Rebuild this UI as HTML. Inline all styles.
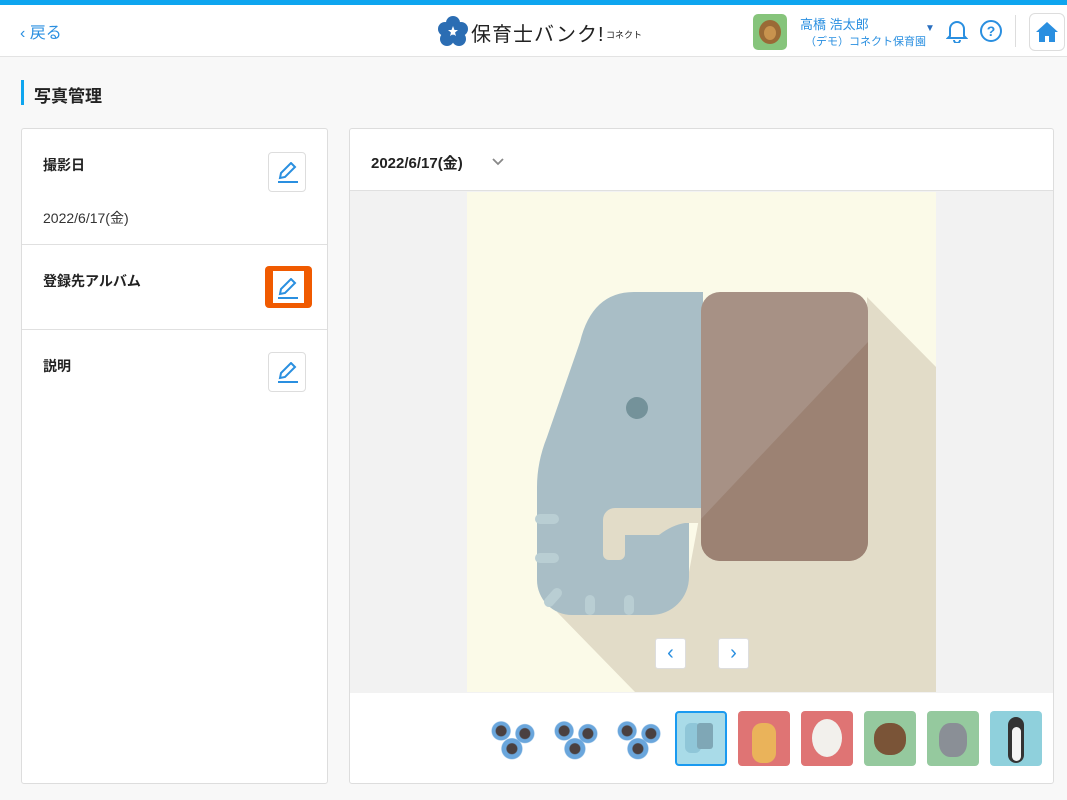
<!DOCTYPE html>
<html><head><meta charset="utf-8"><style>
*{margin:0;padding:0;box-sizing:border-box}
body{width:1067px;height:800px;background:#f8f8f8;font-family:"Liberation Sans","Noto Sans CJK JP",sans-serif;position:relative;overflow:hidden;color:#222}
.top{position:absolute;left:0;top:0;width:1067px;height:5px;background:#0ea5ef}
.hdr{position:absolute;left:0;top:5px;width:1067px;height:52px;background:#fff;border-bottom:1px solid #e3e3e3}
.abs{position:absolute}
.card{position:absolute;background:#fff;border:1px solid #ddd;border-radius:3px}
.btn{position:absolute;width:38px;height:40px;border:1px solid #ddd;border-radius:4px;background:#fff}
.lbl{position:absolute;font-size:14px;font-weight:bold;color:#222}
.thumb{position:absolute;top:711px;width:52px;height:55px;border-radius:4px;overflow:hidden}
</style></head><body>
<div class="top"></div>
<div class="hdr">
 <div class="abs" style="left:20px;top:14px;color:#2a8fe0;font-size:16px">&#8249;&nbsp;戻る</div>
 <svg class="abs" style="left:438px;top:9px" width="30" height="34" viewBox="0 0 30 34"><g fill="#2b6db3"><circle cx="15" cy="9" r="7"/><circle cx="7" cy="15" r="7"/><circle cx="23" cy="15" r="7"/><circle cx="9" cy="25" r="7"/><circle cx="21" cy="25" r="7"/></g><polygon points="15,12 16.5,16 20,16 17,18.5 18,22 15,20 12,22 13,18.5 10,16 13.5,16" fill="#fff"/></svg>
 <div class="abs" style="left:471px;top:13px;font-size:20px;color:#222;letter-spacing:1px">保育士バンク!</div>
 <div class="abs" style="left:606px;top:23px;font-size:9px;color:#222">コネクト</div>
 <div class="abs" style="left:753px;top:9px;width:34px;height:36px;border-radius:5px;background:#86c47b"><div style="position:absolute;left:6px;top:6px;width:22px;height:24px;border-radius:50%;background:#9a6a36"></div><div style="position:absolute;left:11px;top:12px;width:12px;height:14px;border-radius:50%;background:#c8934e"></div></div>
 <div class="abs" style="left:800px;top:9px;font-size:13px;color:#2a8fe0">高橋 浩太郎</div>
 <div class="abs" style="left:805px;top:28px;font-size:11px;color:#2a8fe0">（デモ）コネクト保育園</div>
 <div class="abs" style="left:925px;top:18px;font-size:10px;color:#2a6fc0">▼</div>
 <svg class="abs" style="left:946px;top:14px" width="22" height="24" viewBox="0 0 22 24"><path d="M4 17V10a7 7 0 0114 0v7l2 2H2z" fill="none" stroke="#2a8fe0" stroke-width="2"/><path d="M8 21a3 3 0 006 0" fill="none" stroke="#2a8fe0" stroke-width="2"/></svg>
 <svg class="abs" style="left:979px;top:14px" width="24" height="24" viewBox="0 0 24 24"><circle cx="12" cy="12" r="10" fill="none" stroke="#2a8fe0" stroke-width="2"/><text x="12" y="17" font-size="14" font-weight="bold" text-anchor="middle" fill="#2a8fe0" font-family="Liberation Sans">?</text></svg>
 <div class="abs" style="left:1015px;top:10px;width:1px;height:32px;background:#ddd"></div>
 <div class="abs" style="left:1029px;top:8px;width:36px;height:38px;border:1px solid #ddd;border-radius:6px;background:#fff"></div>
 <svg class="abs" style="left:1035px;top:16px" width="24" height="22" viewBox="0 0 24 22"><path d="M12 1L1 11h3v10h6v-6h4v6h6V11h3z" fill="#2a8fe0"/></svg>
</div>
<div class="abs" style="left:21px;top:80px;width:3px;height:25px;background:#0ea5ef"></div>
<div class="abs" style="left:34px;top:82px;font-size:17px;font-weight:bold">写真管理</div>

<div class="card" style="left:21px;top:128px;width:307px;height:656px"></div>
<div class="lbl" style="left:43px;top:155px">撮影日</div>
<div class="abs" style="left:43px;top:208px;font-size:14px;color:#333">2022/6/17(金)</div>
<div class="abs" style="left:22px;top:244px;width:305px;height:1px;background:#e0e0e0"></div>
<div class="lbl" style="left:43px;top:271px">登録先アルバム</div>
<div class="abs" style="left:22px;top:329px;width:305px;height:1px;background:#e0e0e0"></div>
<div class="lbl" style="left:43px;top:356px">説明</div>
<div class="btn" style="left:268px;top:152px"></div>
<div class="abs" style="left:265px;top:266px;width:47px;height:42px;border-radius:4px;background:#f05a00"><div style="position:absolute;left:8px;top:5px;width:31px;height:32px;background:#fff"></div></div>
<div class="btn" style="left:268px;top:352px"></div>
<svg class="abs" style="left:276px;top:162px" width="24" height="22" viewBox="0 0 24 22"><path d="M4 16l1-5L15 1l4 4L9 15z" fill="none" stroke="#2a8fe0" stroke-width="2"/><rect x="2" y="19" width="20" height="2" fill="#2a8fe0"/></svg>
<svg class="abs" style="left:276px;top:278px" width="24" height="22" viewBox="0 0 24 22"><path d="M4 16l1-5L15 1l4 4L9 15z" fill="none" stroke="#2a8fe0" stroke-width="2"/><rect x="2" y="19" width="20" height="2" fill="#2a8fe0"/></svg>
<svg class="abs" style="left:276px;top:362px" width="24" height="22" viewBox="0 0 24 22"><path d="M4 16l1-5L15 1l4 4L9 15z" fill="none" stroke="#2a8fe0" stroke-width="2"/><rect x="2" y="19" width="20" height="2" fill="#2a8fe0"/></svg>

<div class="card" style="left:349px;top:128px;width:705px;height:656px"></div>
<div class="abs" style="left:371px;top:152px;font-size:15px;font-weight:bold">2022/6/17(金)</div>
<svg class="abs" style="left:491px;top:156px" width="14" height="12" viewBox="0 0 14 12"><path d="M2 3l5 5 5-5" fill="none" stroke="#888" stroke-width="1.8"/></svg>
<div class="abs" style="left:350px;top:190px;width:703px;height:1px;background:#e0e0e0"></div>
<div class="abs" style="left:350px;top:191px;width:703px;height:502px;background:#f2f2f2"></div>
<svg class="abs" style="left:467px;top:192px" width="469" height="500" viewBox="0 0 469 500">
<rect width="469" height="500" fill="#fbfae8"/>
<polygon points="400,105 469,175 469,500 168,500 90,420 222,380 234,316 400,316" fill="#e2dcc8"/>
<path d="M167 100H236V316H222V385a38 38 0 01-38 38H105a35 35 0 01-35-35V295Q70 270 80 245L113 150Q125 100 167 100z" fill="#a9bec6"/>
<path d="M148 316H234V331H218Q205 333 192 343H158V362a6 6 0 01-6 6H142a6 6 0 01-6-6V328a12 12 0 0112-12z" fill="#e2dcc8"/>
<circle cx="170" cy="216" r="11" fill="#74929a"/>
<g fill="#b9ced3"><rect x="68" y="322" width="24" height="10" rx="5"/><rect x="68" y="361" width="24" height="10" rx="5"/><rect x="118" y="403" width="10" height="20" rx="5"/><rect x="157" y="403" width="10" height="20" rx="5"/><path d="M82 410l8-9" stroke="#b9ced3" stroke-width="10" stroke-linecap="round"/></g>
<rect x="234" y="100" width="167" height="269" rx="19" fill="#a79185"/>
<path d="M401 150V350a19 19 0 01-19 19H253a19 19 0 01-19-19V327z" fill="#9c8273"/>
</svg>
<div class="abs" style="left:655px;top:638px;width:31px;height:31px;background:#fff;border:1px solid #ddd;border-radius:3px;color:#2a8fe0;font-size:20px;text-align:center;line-height:28px">&#8249;</div>
<div class="abs" style="left:718px;top:638px;width:31px;height:31px;background:#fff;border:1px solid #ddd;border-radius:3px;color:#2a8fe0;font-size:20px;text-align:center;line-height:28px">&#8250;</div>

<div class="abs" style="left:486px;top:712px;width:54px;height:54px;background:radial-gradient(circle at 28% 35%,#4a4040 0 5px,#6aa6dc 6px 9px,transparent 10px),radial-gradient(circle at 72% 40%,#4a4040 0 5px,#6aa6dc 6px 9px,transparent 10px),radial-gradient(circle at 48% 68%,#4a4040 0 5px,#6aa6dc 6px 10px,transparent 11px)"></div>
<div class="abs" style="left:549px;top:712px;width:54px;height:54px;background:radial-gradient(circle at 28% 35%,#4a4040 0 5px,#6aa6dc 6px 9px,transparent 10px),radial-gradient(circle at 72% 40%,#4a4040 0 5px,#6aa6dc 6px 9px,transparent 10px),radial-gradient(circle at 48% 68%,#4a4040 0 5px,#6aa6dc 6px 10px,transparent 11px)"></div>
<div class="abs" style="left:612px;top:712px;width:54px;height:54px;background:radial-gradient(circle at 28% 35%,#4a4040 0 5px,#6aa6dc 6px 9px,transparent 10px),radial-gradient(circle at 72% 40%,#4a4040 0 5px,#6aa6dc 6px 9px,transparent 10px),radial-gradient(circle at 48% 68%,#4a4040 0 5px,#6aa6dc 6px 10px,transparent 11px)"></div>
<div class="thumb" style="left:675px;background:#a9dbe8;border:2px solid #1a9af0"><div style="position:absolute;left:8px;top:10px;width:16px;height:30px;border-radius:6px;background:#8fc6d8"></div><div style="position:absolute;left:20px;top:10px;width:16px;height:26px;border-radius:3px;background:#7fa7b6"></div></div>
<div class="thumb" style="left:738px;background:#df7474"><div style="position:absolute;left:14px;top:12px;width:24px;height:40px;border-radius:10px;background:#eab35a"></div></div>
<div class="thumb" style="left:801px;background:#df7474"><div style="position:absolute;left:11px;top:8px;width:30px;height:38px;border-radius:50%;background:#f2f0ec"></div></div>
<div class="thumb" style="left:864px;background:#95c99e"><div style="position:absolute;left:10px;top:12px;width:32px;height:32px;border-radius:45%;background:#7a5437"></div></div>
<div class="thumb" style="left:927px;background:#95c99e"><div style="position:absolute;left:12px;top:12px;width:28px;height:34px;border-radius:40%;background:#8a8f96"></div></div>
<div class="thumb" style="left:990px;background:#8fd0dc"><div style="position:absolute;left:18px;top:6px;width:16px;height:46px;border-radius:8px;background:#333"></div><div style="position:absolute;left:22px;top:16px;width:9px;height:34px;border-radius:5px;background:#f4f4f4"></div></div>
</body></html>
